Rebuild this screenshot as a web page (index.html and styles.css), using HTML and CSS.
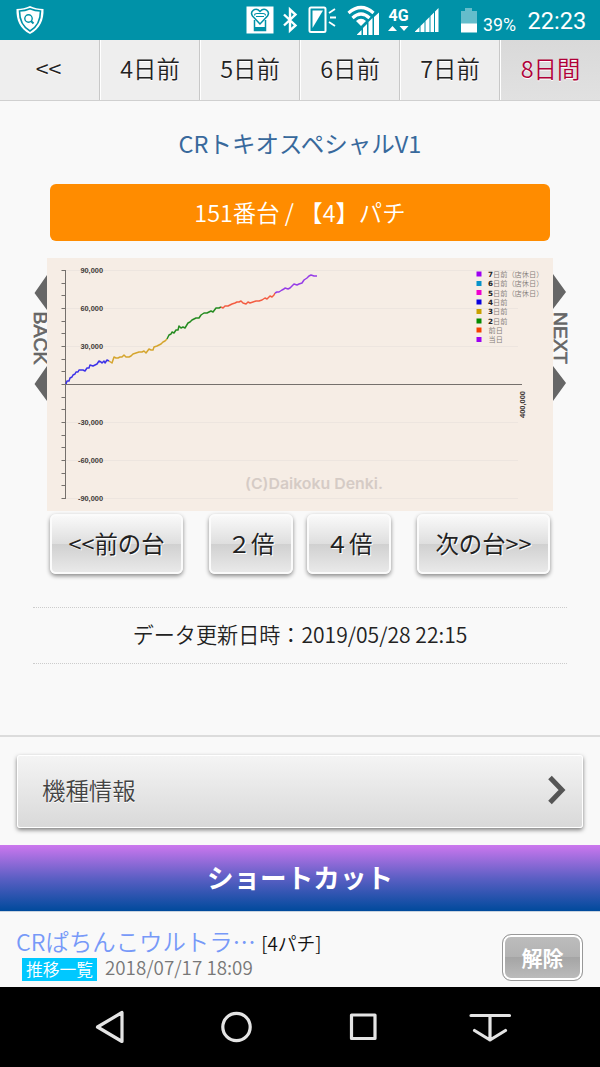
FILE: index.html
```html
<!DOCTYPE html>
<html lang="ja">
<head>
    <meta charset="UTF-8">
    <meta name="viewport" content="width=device-width, initial-scale=1.0">
    <title>CRトキオスペシャルV1</title>
    <link rel="stylesheet" href="styles.css">
</head>
<body>
    <header class="status-bar">
        <svg class="status-icons" width="600" height="40" viewBox="0 0 600 40">
            <!-- shield -->
            <path d="M16.5 9 Q24 9 30 6 Q36 9 43.5 9 C44 20 40 29 30 34 C20 29 16 20 16.5 9Z" fill="#fff"/>
            <path d="M19.500 11 Q25 11 30 8.800 Q35 11 40.500 11 C40.500 20 37 27 30 31 C23 27 19.500 20 19.500 11Z" fill="none" stroke="#0092a8" stroke-width="1.600"/>
            <circle cx="28.500" cy="18.500" r="3.700" fill="none" stroke="#0092a8" stroke-width="1.400"/>
            <path d="M31 21 L33.500 23.500" stroke="#0092a8" stroke-width="2"/>
            <!-- heart cup -->
            <path d="M246.500 6.500H273.500V33.500H246.500Z" fill="#fff"/>
            <path d="M254.500 20V30.500H265.500V20" fill="none" stroke="#0092a8" stroke-width="1.500"/>
            <path d="M254.500 27H265.500V31H254.500Z" fill="#0092a8"/>
            <path d="M260 24 L252.500 16 C249.500 11.500 255.500 6.500 260 11.500 C264.500 6.500 270.500 11.500 267.500 16Z" fill="#fff" stroke="#0092a8" stroke-width="1.500"/>
            <path d="M254.500 15.500Q254.500 13.500 257 13.500H263Q265.500 13.500 265.500 15.500M256 16.500H264" fill="none" stroke="#0092a8" stroke-width="1.200"/>
            <!-- bluetooth -->
            <path d="M284 14.500 L295.500 25.500 L290 30.500 V9.500 L295.500 14.500 L284 25.500" fill="none" stroke="#fff" stroke-width="2.400"/>
            <!-- screen -->
            <rect x="309.500" y="7.500" width="16" height="24.500" rx="1.500" fill="none" stroke="#fff" stroke-width="2"/>
            <path d="M312.500 10.500H323L312.500 28Z" fill="#fff"/>
            <path d="M329 13L335 9M330 17.500H336M329 22L335 26" stroke="#fff" stroke-width="1.800"/>
            <!-- wifi -->
            <path d="M348.500 13 Q361 2 373.500 13M352.500 18 Q361 10 369.500 18" fill="none" stroke="#fff" stroke-width="3.200"/>
            <path d="M356 21 Q361 16.500 366 21 L361 26Z" fill="#fff"/>
            <path d="M357 35V34.500L361.500 30V35ZM363 35V28L367 24V35ZM368.500 35V22L372.500 18V35ZM374 35V17L379 12.500V35Z" fill="#fff"/>
            <path d="M388 31H397L392.500 26ZM399.500 26H408.500L404 31Z" fill="#fff"/>
            <!-- mobile signal -->
            <path d="M415 32V31.500L419.500 27V32ZM420.500 32V26L424.500 22V32ZM425.500 32V21L429.500 17V32ZM430.500 32V16L434 12.500V32ZM435 32V11.500L438.500 8V32Z" fill="#fff"/>
            <!-- battery -->
            <path d="M465 8H472V11H477V24H461V11H465Z" fill="#65bdcb"/>
            <path d="M461 23.500H477V32.500H461Z" fill="#fff"/>
            <text x="388.500" y="20.500" class="status-net">4G</text>
            <text x="483" y="31" class="status-battery">39%</text>
            <text x="527.500" y="29" class="status-time">22:23</text>
        </svg>
    </header>

    <nav class="day-tabs">
        <a class="day-tab">&lt;&lt;</a>
        <a class="day-tab">4日前</a>
        <a class="day-tab">5日前</a>
        <a class="day-tab">6日前</a>
        <a class="day-tab">7日前</a>
        <a class="day-tab active">8日間</a>
    </nav>

    <main class="content">
        <h1 class="machine-name">CRトキオスペシャルV1</h1>
        <div class="machine-number">151番台 / 【4】パチ</div>

        <div class="chart-row">
            <svg class="chart-side" width="14" height="253" viewBox="33 258 14 253">
                <path d="M47 275V310L34.500 293ZM47 366V401L34.500 384Z" fill="#666"/>
                <text transform="translate(33.500 311.500) rotate(90)" textLength="53" lengthAdjust="spacingAndGlyphs" class="side-label">BACK</text>
            </svg>
            <svg class="chart" width="506" height="253" viewBox="47 258 506 253">
                <path d="M66 270.500H518M66 308.500H518M66 346.500H518M66 422.500H518M66 460.500H518M66 498.500H518" stroke="#ede5df"/>
                <path d="M65.500 270V499M61.500 270.500H66M61.500 283.500H66M61.500 295.500H66M61.500 308.500H66M61.500 321.500H66M61.500 333.500H66M61.500 346.500H66M61.500 359.500H66M61.500 371.500H66M61.500 384.500H522M61.500 397.500H66M61.500 409.500H66M61.500 422.500H66M61.500 435.500H66M61.500 447.500H66M61.500 460.500H66M61.500 473.500H66M61.500 485.500H66M61.500 498.500H66" fill="none" stroke="#75706c"/>
                <g class="axis-label">
                    <text x="103" y="273">90,000</text>
                    <text x="103" y="311">60,000</text>
                    <text x="103" y="349">30,000</text>
                    <text x="103" y="425">-30,000</text>
                    <text x="103" y="463">-60,000</text>
                    <text x="103" y="501">-90,000</text>
                    <text transform="translate(524.500 391) rotate(-90)" textLength="27" lengthAdjust="spacingAndGlyphs">400,000</text>
                </g>
                <g class="series">
                    <polyline stroke="#3d32e8" points="66,384 67,381 69,381 70,378 72,377 73,375 75,374 76,372 78,372 79,370 81,370 83,370 85,371 87,368 89,368 90,365 93,366 95,365 97,364 99,361 101,362 102,363 104,361 105,363 107,360 109,361"/>
                    <polyline stroke="#d5a52e" points="109,361 112,363 114,357 116,358 118,358 120,357 122,357 124,355 126,357 129,357 131,356 133,354 136,353 139,352 142,352 144,351 146,353 149,349 151,350 153,350 154,347 157,346 159,345 161,344 163,342 165,341 167,339"/>
                    <polyline stroke="#258b20" points="167,339 169,335 171,334 172,332 174,333 176,330 178,330 179,326 181,328 183,327 185,328 188,323 190,322 192,320 194,319 196,318 199,318 201,315 204,313 207,313 209,312 211,311 213,312 216,308 219,308 221,307"/>
                    <polyline stroke="#f35c42" points="221,307 223,308 225,306 228,306 230,305 232,304 235,303 237,302 239,302 241,301 243,303 246,304 248,302 250,303 253,302 256,301 259,301 262,300 265,298 267,299 270,296 272,297 274,295 275,293"/>
                    <polyline stroke="#963de7" points="275,293 277,292 279,292 282,290 284,289 285,288 288,289 290,288 292,286 294,284 297,285 299,284 302,283 304,280 307,278 309,276 311,275 314,276 317,276"/>
                </g>
                <g class="legend">
                    <path d="M476.500 271.500h5v5h-5z" fill="#9d00f2"/><text x="488" y="277"><tspan>7</tspan>日前（店休日）</text>
                    <path d="M476.500 281h5v5h-5z" fill="#0793c9"/><text x="488" y="286.300"><tspan>6</tspan>日前（店休日）</text>
                    <path d="M476.500 290h5v5h-5z" fill="#f000cf"/><text x="488" y="295.600"><tspan>5</tspan>日前（店休日）</text>
                    <path d="M476.500 299.500h5v5h-5z" fill="#0900e1"/><text x="488" y="305"><tspan>4</tspan>日前</text>
                    <path d="M476.500 309h5v5h-5z" fill="#c9a000"/><text x="488" y="314.300"><tspan>3</tspan>日前</text>
                    <path d="M476.500 318.500h5v5h-5z" fill="#058a00"/><text x="488" y="323.600"><tspan>2</tspan>日前</text>
                    <path d="M476.500 327.500h5v5h-5z" fill="#f64000"/><text x="488.500" y="333">前日</text>
                    <path d="M476.500 337h5v5h-5z" fill="#9d00f2"/><text x="488.500" y="342.300">当日</text>
                </g>
                <text x="245" y="489" textLength="138" lengthAdjust="spacingAndGlyphs" class="copyright">(C)Daikoku Denki.</text>
            </svg>
            <svg class="chart-side" width="14" height="253" viewBox="553 258 14 253">
                <path d="M553 274V309L566 292ZM553 366V401L566 383Z" fill="#666"/>
                <text transform="translate(554 312) rotate(90)" textLength="52" lengthAdjust="spacingAndGlyphs" class="side-label">NEXT</text>
            </svg>
        </div>

        <div class="button-row">
            <button class="btn btn-wide">&lt;&lt;前の台</button>
            <div class="zoom-buttons">
                <button class="btn">２倍</button>
                <button class="btn">４倍</button>
            </div>
            <button class="btn btn-wide">次の台&gt;&gt;</button>
        </div>

        <p class="updated">データ更新日時：2019/05/28 22:15</p>
    </main>

    <section class="info">
        <a class="info-link">
            <span>機種情報</span>
            <svg width="20" height="30" viewBox="0 0 20 30"><path d="M3 2.500L15 15L3 27.500" fill="none" stroke="#555" stroke-width="5"/></svg>
        </a>
    </section>

    <h2 class="shortcut-title">ショートカット</h2>
    <section class="shortcut">
        <div class="shortcut-text">
            <div class="shortcut-machine"><a class="shortcut-name">CRぱちんこウルトラ…</a> <span class="rate">[4パチ]</span></div>
            <div class="shortcut-meta"><span class="tag">推移一覧</span><span class="date">2018/07/17 18:09</span></div>
        </div>
        <button class="release-btn">解除</button>
    </section>

    <footer class="nav-bar">
        <svg width="600" height="80" viewBox="0 987 600 80" fill="none" stroke="#e4e4e4" stroke-width="3.200" stroke-linejoin="round" stroke-linecap="round">
            <path d="M122 1012.500V1041.500L97.500 1027Z"/>
            <circle cx="236.500" cy="1027" r="13.700"/>
            <rect x="351.500" y="1015" width="23.500" height="23.500"/>
            <path d="M471 1015.500H509.500M490 1016V1040M474.500 1030.500L490 1040L505.500 1030.500"/>
        </svg>
    </footer>
</body>
</html>
```

FILE: styles.css
```css
* {
    box-sizing: border-box;
}

body {
    margin: 0;
    height: 1067px;
    display: flex;
    flex-direction: column;
    overflow: hidden;
    background: #f9f9f9;
    color: #222;
    font-family: "Noto Sans CJK JP", sans-serif;
    font-size: 23.4px;
    font-weight: 350;
}

svg {
    display: block;
}

button {
    font-family: inherit;
    font-size: inherit;
    color: inherit;
    padding: 0;
}

.status-bar {
    height: 40px;
    background: #0092a8;
}

.status-icons {
    font-family: Roboto, sans-serif;
    font-weight: 400;
    fill: #fff;
}

.status-net {
    font-size: 16px;
    font-weight: bold;
}

.status-battery {
    font-size: 17.8px;
}

.status-time {
    font-size: 23.6px;
}

.day-tabs {
    display: grid;
    grid-template-columns: repeat(6, 1fr);
    height: 61px;
    border-bottom: 1px solid #d0d0d0;
}

.day-tab {
    display: flex;
    align-items: center;
    justify-content: center;
    padding-bottom: 5px;
    background: #eee;
    border-right: 1px solid #c8c8c8;
    border-left: 1px solid #fff;
    text-shadow: 0 1px 0 #fff;
}

.day-tab:first-child {
    padding-right: 2px;
    border-left: none;
}

.day-tab.active {
    background: linear-gradient(#d9d9d9, #e1e1e1);
    color: #b00038;
    border-right: none;
}

.content {
    height: 636px;
    padding: 0 33px;
    border-bottom: 2px solid #dcdcdc;
}

.machine-name {
    margin: 0;
    height: 83px;
    line-height: 84px;
    text-align: center;
    font-size: 23.5px;
    font-weight: normal;
    color: #38699c;
}

.machine-number {
    margin: 0 17px 17px;
    height: 57px;
    line-height: 56px;
    border-radius: 6px;
    background: #ff8c00;
    color: #fff;
    text-align: center;
}

.chart-row {
    display: flex;
}

.chart {
    background: #f6ede5;
}

.chart-side {
    overflow: visible;
}

.side-label {
    font: 17.5px "Liberation Sans", sans-serif;
    fill: #666;
    stroke: #666;
    stroke-width: 0.6px;
}

.axis-label {
    font: bold 7px "Liberation Sans", sans-serif;
    fill: #3f3a37;
    text-anchor: end;
}

.axis-label text {
    font-size: 7.4px;
}

.series {
    fill: none;
    stroke-width: 1.5;
    stroke-linejoin: round;
}

.legend text {
    font-size: 7.2px;
    fill: #817b77;
}

.legend tspan {
    font-family: "DejaVu Sans", sans-serif;
    font-weight: bold;
    fill: #222;
}

.copyright {
    font: 600 15px Inter, sans-serif;
    fill: #d5cbc5;
}

.button-row {
    display: flex;
    justify-content: space-between;
    margin: 3px 17px 33px;
}

.zoom-buttons {
    display: flex;
    gap: 14px;
}

.btn {
    width: 84px;
    height: 60px;
    padding-bottom: 3px;
    border: 2px solid #fbfbfb;
    border-radius: 6px;
    background: linear-gradient(#f9f9f9, #dedede 50%, #d0d0d0 50%, #e9e9e9);
    box-shadow: 0 2px 4px rgba(0, 0, 0, 0.45);
    text-shadow: 1px 1px 0 #fff;
}

.btn-wide {
    width: 133px;
}

.updated {
    margin: 0;
    height: 57px;
    line-height: 53px;
    border: dotted #ccc;
    border-width: 1px 0;
    text-align: center;
    font-size: 21.1px;
}

.info {
    height: 108px;
    padding: 18px 17px 0;
}

.info-link {
    display: flex;
    align-items: center;
    justify-content: space-between;
    height: 73px;
    padding: 0 15px 4px 24px;
    border: 1px solid #fff;
    border-radius: 3px;
    background: linear-gradient(#f4f4f4, #d9d9d9);
    box-shadow: 0 2px 4px rgba(0, 0, 0, 0.5);
    color: #444;
    text-shadow: 0 1px 0 #fff;
}

.shortcut-title {
    margin: 0;
    height: 67px;
    line-height: 63px;
    background: linear-gradient(#cc77ee, #5c5fc4 50%, #004a9c);
    border-bottom: 1px solid #c9d3df;
    color: #fff;
    text-align: center;
    font-size: 26.6px;
}

.shortcut {
    display: flex;
    justify-content: space-between;
    height: 75px;
    padding: 13px 17px 0 16px;
}

.shortcut-machine {
    height: 33px;
    line-height: 33px;
    white-space: nowrap;
}

.shortcut-name {
    color: #7799f8;
}

.rate {
    font-size: 18.8px;
    color: #111;
}

.shortcut-meta {
    display: flex;
    gap: 8px;
    padding-left: 6px;
    line-height: 23px;
    font-size: 18.8px;
    color: #777;
}

.tag {
    width: 75px;
    height: 23px;
    background: #00c8ff;
    color: #fff;
    text-align: center;
    font-size: 16.8px;
}

.date {
    line-height: 17px;
}

.release-btn {
    width: 81px;
    height: 47px;
    margin-top: 9px;
    padding-bottom: 2px;
    border: 1px solid #999;
    border-radius: 9px;
    background: linear-gradient(#bdbdbd, #b2b2b2 50%, #a5a5a5 50%, #bdbdbd);
    box-shadow: inset 0 0 0 2px #fff;
    color: #fff;
    font-size: 21px;
    font-weight: bold;
}

.nav-bar {
    height: 80px;
    background: #000;
}
```
